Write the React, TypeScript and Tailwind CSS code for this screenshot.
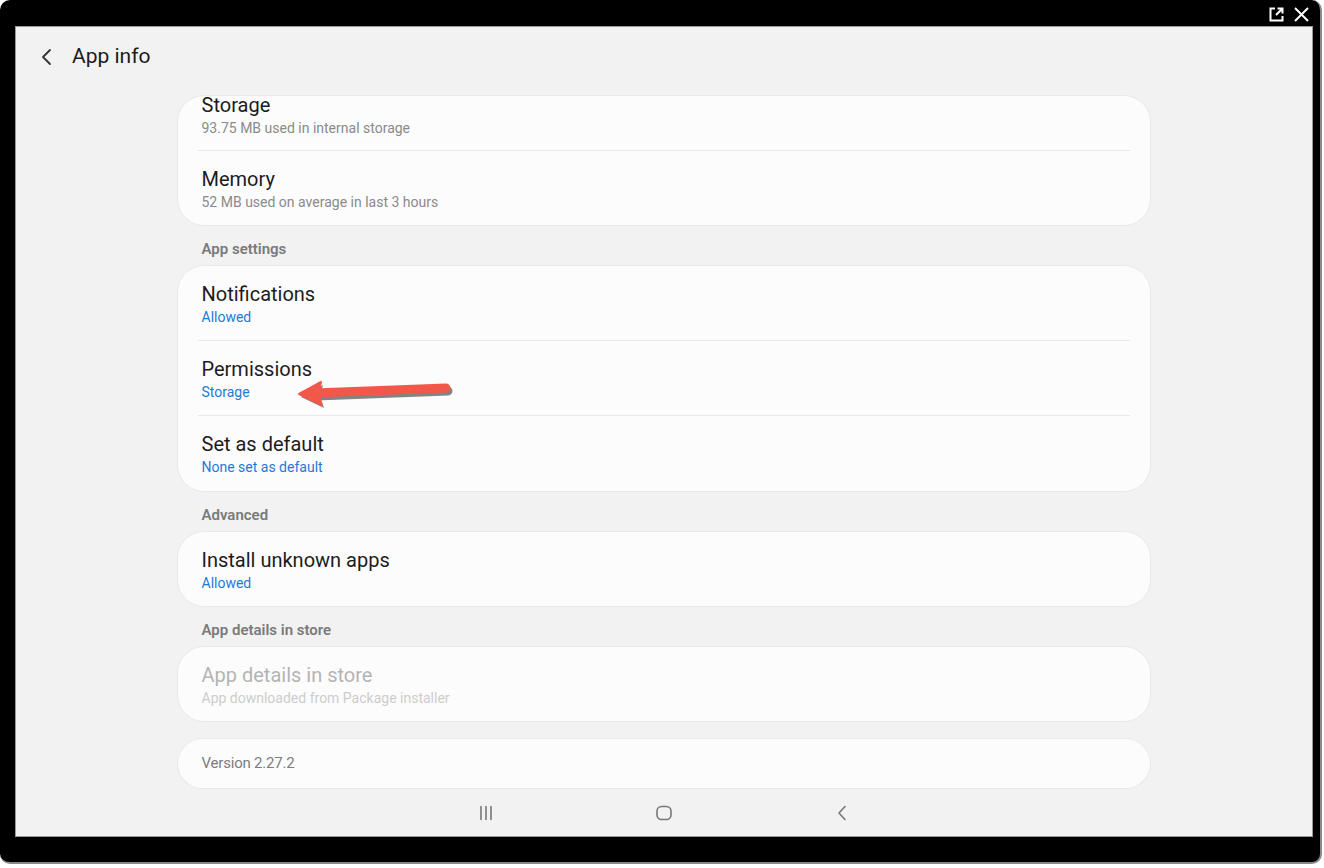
import React from 'react'

type Row = { title: string; sub: string; tone?: 'gray' | 'blue' | 'disabled' }

const subClass = {
  gray: 'text-[#8a8a8a]',
  blue: 'text-[#1d7ad8]',
  disabled: 'text-[#cdcdcd]',
}

const SettingRow: React.FC<{
  row: Row
  divider?: boolean
  h?: string
  top?: string
  titleLead?: string
  subGap?: string
}> = ({ row, divider, h = 'h-[75px]', top = 'pt-[16px]', titleLead = 'leading-[24px]', subGap = 'mt-[2px]' }) => {
  const tone = row.tone ?? 'gray'
  return (
    <div className={`relative ${h} px-6 ${top}`}>
      <div className={`text-[20px] ${titleLead} ${tone === 'disabled' ? 'text-[#b4b4b4]' : 'text-[#1c1c1c]'}`}>
        {row.title}
      </div>
      <div className={`${subGap} text-[14px] leading-[18px] ${subClass[tone]}`}>{row.sub}</div>
      {divider && <div className="absolute bottom-0 left-5 right-5 h-px bg-[#e8e8e8]" />}
    </div>
  )
}

const Card: React.FC<{ children: React.ReactNode; className?: string }> = ({ children, className = '' }) => (
  <div className={`w-[972px] rounded-[26px] bg-[#fcfcfc] shadow-[0_0_0_1px_#e9e9e9] ${className}`}>{children}</div>
)

const SectionHeading: React.FC<{ label: string }> = ({ label }) => (
  <div className="w-[972px] px-6 pt-[15px] pb-[8px] text-[15px] font-semibold leading-[18px] text-[#7a7a7a]">
    {label}
  </div>
)

const RedArrow = () => (
  <svg className="absolute left-[290px] top-[371px]" width="170" height="40" viewBox="0 0 170 40">
    <g opacity="0.55" transform="translate(2 3)">
      <line x1="24" y1="22" x2="156" y2="17" stroke="#222" strokeWidth="9" strokeLinecap="round" />
      <polygon points="9,23 31,11 28,23 32,34" fill="#222" />
    </g>
    <line x1="24" y1="22" x2="156" y2="17" stroke="#f2584a" strokeWidth="9" strokeLinecap="round" />
    <polygon points="9,23 31,11 28,23 32,34" fill="#f2584a" strokeLinejoin="round" stroke="#f2584a" strokeWidth="2" />
  </svg>
)

export default function App() {
  return (
    <div className="relative h-[868px] w-[1324px] bg-white font-['Roboto','Noto_Sans',sans-serif]">
      <div className="h-[864px] w-[1322px] rounded-[10px] border-b-2 border-r-2 border-[#8a8a8a] bg-black pt-[26px] pl-[15px]">
        <div className="flex h-[811px] w-[1298px] flex-col border border-[#9a9a9a] bg-[#f2f2f2]">
          {/* header */}
          <div className="flex h-[59px] shrink-0 items-center pl-[24px]">
            <svg width="14" height="18" viewBox="0 0 14 18">
              <path d="M10 2 L3 9 L10 16" fill="none" stroke="#333" strokeWidth="1.8" strokeLinecap="round" strokeLinejoin="round" />
            </svg>
            <span className="ml-[18px] text-[21px] text-[#1c1c1c]">App info</span>
          </div>

          <div className="-ml-px flex flex-1 flex-col items-center pt-[10px]">
            <Card className="h-[129px]">
              <SettingRow
                h="h-[55px]"
                top="pt-[1px]"
                titleLead="leading-[16px]"
                subGap="mt-[6px]"
                row={{ title: 'Storage', sub: '93.75 MB used in internal storage' }}
                divider
              />
              <SettingRow row={{ title: 'Memory', sub: '52 MB used on average in last 3 hours' }} />
            </Card>

            <SectionHeading label="App settings" />
            <Card>
              <SettingRow row={{ title: 'Notifications', sub: 'Allowed', tone: 'blue' }} divider />
              <SettingRow row={{ title: 'Permissions', sub: 'Storage', tone: 'blue' }} divider />
              <SettingRow row={{ title: 'Set as default', sub: 'None set as default', tone: 'blue' }} />
            </Card>

            <SectionHeading label="Advanced" />
            <Card>
              <SettingRow h="h-[74px]" row={{ title: 'Install unknown apps', sub: 'Allowed', tone: 'blue' }} />
            </Card>

            <SectionHeading label="App details in store" />
            <Card>
              <SettingRow
                h="h-[74px]"
                row={{ title: 'App details in store', sub: 'App downloaded from Package installer', tone: 'disabled' }}
              />
            </Card>

            <Card className="mt-[18px] flex h-[49px] items-center px-6">
              <span className="text-[15px] tracking-[-0.2px] text-[#7d7d7d]">Version 2.27.2</span>
            </Card>

            {/* nav bar */}
            <div className="flex h-[49px] w-full items-center justify-center gap-[160px]">
              <svg width="18" height="16" viewBox="0 0 18 16">
                <path d="M4 1.5v13M9 1.5v13M14 1.5v13" stroke="#777" strokeWidth="1.6" strokeLinecap="round" />
              </svg>
              <svg width="18" height="16" viewBox="0 0 18 16">
                <rect x="2" y="1.5" width="14" height="13" rx="4.5" fill="none" stroke="#777" strokeWidth="1.6" />
              </svg>
              <svg width="18" height="16" viewBox="0 0 18 16">
                <path d="M12 1.5 L6 8 L12 14.5" fill="none" stroke="#777" strokeWidth="1.6" strokeLinecap="round" strokeLinejoin="round" />
              </svg>
            </div>
          </div>
        </div>
      </div>

      {/* window controls */}
      <div className="absolute right-[14px] top-[6px] flex items-center gap-[8px]">
        <svg width="17" height="17" viewBox="0 0 17 17">
          <path d="M7 2.5H2.5v12h12V10" fill="none" stroke="#fff" strokeWidth="2" />
          <path d="M8 9l6-6M9.5 2.5h5v5" fill="none" stroke="#fff" strokeWidth="2" />
        </svg>
        <svg width="17" height="17" viewBox="0 0 17 17">
          <path d="M2 2l13 13M15 2L2 15" stroke="#fff" strokeWidth="2" />
        </svg>
      </div>

      <RedArrow />
    </div>
  )
}
